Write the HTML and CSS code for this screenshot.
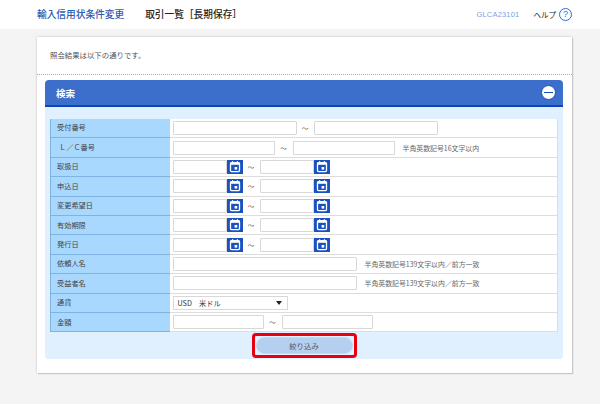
FILE: index.html
```html
<!DOCTYPE html>
<html lang="ja">
<head>
<meta charset="utf-8">
<title>取引一覧</title>
<link rel="stylesheet" href="styles.css">
</head>
<body>
<svg class="sprite" width="0" height="0"><defs>
<symbol id="cal" viewBox="0 0 16 14"><rect x="3.5" y="2.6" width="9" height="9" rx="1" fill="none" stroke="#fff" stroke-width="1.3"/><rect x="3.5" y="2.6" width="9" height="2.2" fill="#fff"/><rect x="5" y="1.2" width="1.2" height="2" fill="#fff"/><rect x="9.8" y="1.2" width="1.2" height="2" fill="#fff"/><rect x="7.6" y="7" width="2.6" height="2.6" fill="#fff"/></symbol>
</defs></svg>
<header class="top">
  <div class="top-left"><span class="crumb">輸入信用状条件変更</span><span class="page-title">取引一覧［長期保存］</span></div>
  <div class="top-right"><span class="code">GLCA23101</span><span class="help">ヘルプ</span><span class="help-icon">?</span></div>
</header>
<main class="card">
  <p class="lead">照会結果は以下の通りです。</p>
  <section class="panel">
    <div class="panel-head"><h2>検索</h2><span class="toggle"><i></i></span></div>
    <div class="panel-body">
      <table class="form">
        <tr><th>受付番号</th><td><div class="f"><input class="w124"><span class="t t1">～</span><input class="w124"></div></td></tr>
        <tr><th class="ind">Ｌ／Ｃ番号</th><td><div class="f"><input class="w102"><span class="t t2">～</span><input class="w102"><span class="note n8">半角英数記号16文字以内</span></div></td></tr>
        <tr><th>取扱日</th><td><div class="f"><input class="w54"><svg class="cb"><use href="#cal"/></svg><span class="t t3">～</span><input class="w54"><svg class="cb"><use href="#cal"/></svg></div></td></tr>
        <tr><th>申込日</th><td><div class="f"><input class="w54"><svg class="cb"><use href="#cal"/></svg><span class="t t3">～</span><input class="w54"><svg class="cb"><use href="#cal"/></svg></div></td></tr>
        <tr><th>変更希望日</th><td><div class="f"><input class="w54"><svg class="cb"><use href="#cal"/></svg><span class="t t3">～</span><input class="w54"><svg class="cb"><use href="#cal"/></svg></div></td></tr>
        <tr><th>有効期限</th><td><div class="f"><input class="w54"><svg class="cb"><use href="#cal"/></svg><span class="t t3">～</span><input class="w54"><svg class="cb"><use href="#cal"/></svg></div></td></tr>
        <tr><th>発行日</th><td><div class="f"><input class="w54"><svg class="cb"><use href="#cal"/></svg><span class="t t3">～</span><input class="w54"><svg class="cb"><use href="#cal"/></svg></div></td></tr>
        <tr><th>依頼人名</th><td><div class="f"><input class="w184"><span class="note n8">半角英数記号139文字以内／前方一致</span></div></td></tr>
        <tr><th>受益者名</th><td><div class="f"><input class="w184"><span class="note n8">半角英数記号139文字以内／前方一致</span></div></td></tr>
        <tr><th>通貨</th><td><div class="f"><div class="select"><span>USD　米ドル</span><b></b></div></div></td></tr>
        <tr><th>金額</th><td><div class="f"><input class="w91"><span class="t t4">～</span><input class="w91"></div></td></tr>
      </table>
      <div class="actions"><span class="hl"><button type="button">絞り込み</button></span></div>
    </div>
  </section>
</main>
</body>
</html>
```
FILE: styles.css
```css
* { box-sizing: border-box; }
html, body { margin: 0; padding: 0; }
body { width: 600px; height: 404px; overflow: hidden; background: #f4f4f4; font-family: "Noto Sans CJK JP", "Liberation Sans", sans-serif; color: #444; }
.sprite { position: absolute; }
.top { height: 29px; background: #fff; display: flex; justify-content: space-between; align-items: center; padding: 0 28px 1px 37px; }
.top-left { display: flex; align-items: center; gap: 21px; font-weight: 500; }
.crumb { font-size: 9.7px; color: #2a5cb4; }
.page-title { font-size: 9.7px; color: #222; }
.top-right { display: flex; align-items: center; font-size: 7.5px; }
.code { color: #7d9fe0; font-family: "Liberation Sans", sans-serif; font-size: 7.5px; letter-spacing: .2px; margin-right: 14px; }
.help { color: #222; font-size: 7.5px; margin-right: 3px; }
.help-icon { width: 13px; height: 13px; border: 1px solid #2a6fd8; border-radius: 50%; color: #2a6fd8; display: flex; align-items: center; justify-content: center; font: 9px "Liberation Sans", sans-serif; }
.card { margin: 8px 28px 0 37px; width: 535px; height: 336px; background: #fff; box-shadow: 0 0 2px #bbb, 1px 1px 1px #ccc; }
.lead { margin: 0; height: 38px; padding: 12px 0 0 13px; font-size: 7.4px; line-height: 12px; color: #555; border-bottom: 1px dotted #aaa; }
.panel { margin: 5px 9px 0 8px; }
.panel-head { height: 27px; background: #3c6fcc; border-bottom: 2px solid #0b45b8; border-radius: 4px 4px 0 0; display: flex; align-items: center; justify-content: space-between; padding: 0 0 0 11px; color: #fff; }
.panel-head h2 { margin: 0; font-size: 9.5px; font-weight: 700; }
.toggle { width: 15px; height: 15px; background: #fff; border: 1px solid #1c50b0; border-radius: 50%; margin-right: 7px; display: flex; align-items: center; justify-content: center; }
.toggle i { display: block; width: 9px; height: 1.5px; background: #1c50b0; }
.panel-body { background: #e0f0fe; height: 252px; padding: 11.5px 5px 0; border-radius: 0 0 3px 3px; }
.form { width: 508px; border-collapse: collapse; table-layout: fixed; }
.form tr { height: 19.4px; }
.form th { width: 119px; padding: 0 0 1px 6px; background: #a9d8ff; border-left: 1px solid #7fb4e2; border-bottom: 1px solid #7fb4e2; text-align: left; font-size: 7.2px; font-weight: 400; color: #444; }
.form th.ind { padding-left: 8px; }
.form td { padding: 0 0 0 3px; background: #fff; border-bottom: 1px solid #ddd; border-right: 1px solid #ddd; }
.f { display: flex; align-items: center; height: 16px; }
input { height: 14px; padding: 0; margin: 0; background: #fff; border: 1px solid #d8d8d8; border-radius: 1px; }
.w124 { width: 124px; }
.w102 { width: 102px; }
.w54 { width: 54px; }
.w184 { width: 184px; }
.w91 { width: 91px; }
.cb { display: block; width: 16px; height: 14px; background: #1a52c0; }
.t { font-size: 6.5px; color: #555; text-align: center; }
.t1 { width: 17px; }
.t2 { width: 18px; }
.t3 { width: 17px; }
.t4 { width: 18px; }
.note { font-size: 6.9px; color: #666; white-space: nowrap; }
.n8 { margin-left: 8px; }
.select { width: 115px; height: 14px; border: 1px solid #d8d8d8; display: flex; align-items: center; justify-content: space-between; padding: 0 5px 0 4px; font-size: 7.2px; color: #333; }
.select b { width: 0; height: 0; border-left: 3.5px solid transparent; border-right: 3.5px solid transparent; border-top: 4px solid #222; }
.actions { display: flex; justify-content: center; padding: 1px 0 0 0; }
.hl { display: block; width: 105px; height: 25px; border: 3px solid #e8000f; border-radius: 4px; padding: 1px; }
.hl button { display: block; width: 97px; height: 17px; padding: 0; border: 1px solid #c6d9f4; border-radius: 9px; background: #b5cff0; font: 7.4px "Noto Sans CJK JP", sans-serif; color: #555; }
```
